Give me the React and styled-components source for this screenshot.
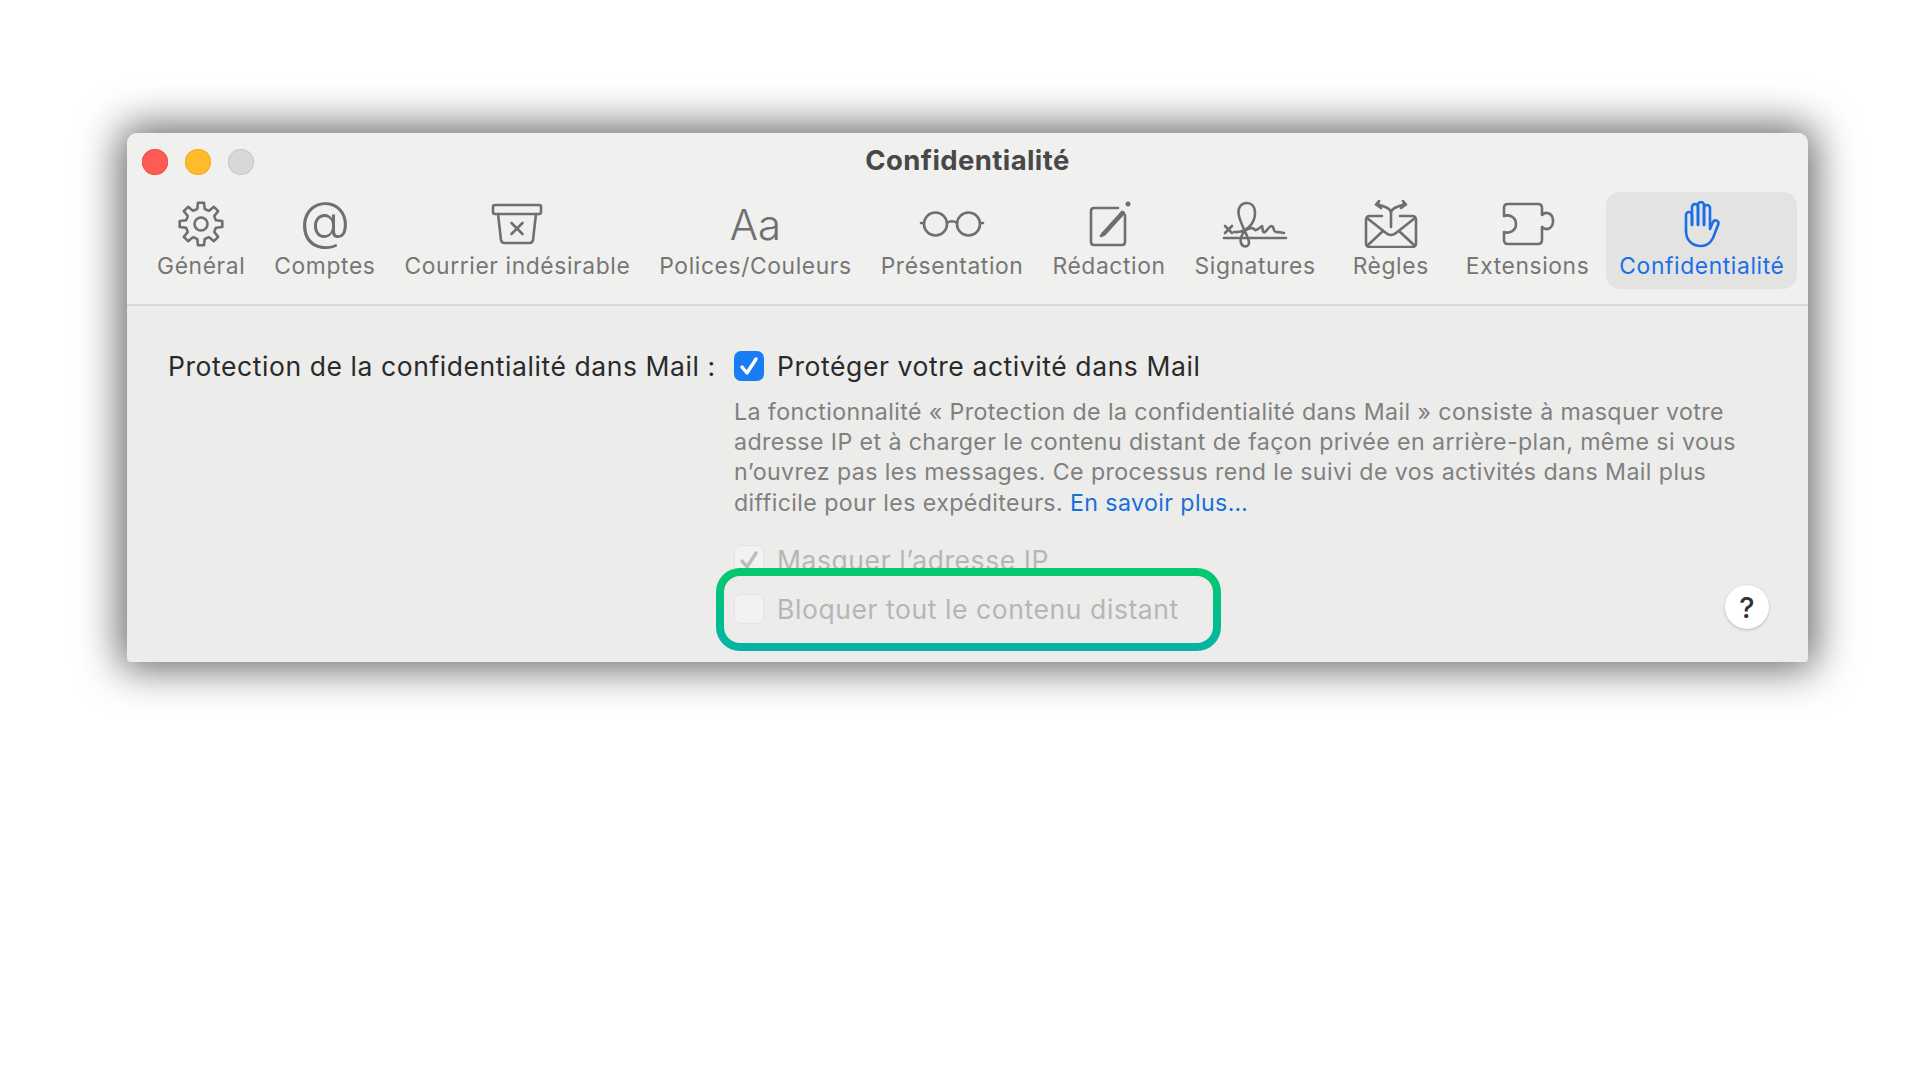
import React from 'react'
import styled, { createGlobalStyle } from 'styled-components'

const GlobalStyle = createGlobalStyle`
  html, body {
    margin: 0;
    background: #fff;
    font-family: Inter, "Liberation Sans", sans-serif;
  }
`

const Page = styled.div`
  width: 1920px;
  height: 1080px;
  padding: 133px 0 0 127px;
  box-sizing: border-box;
  overflow: hidden;
`

const Window = styled.div`
  position: relative;
  width: 1681px;
  height: 529px;
  border-radius: 10px 10px 4px 4px;
  background: #ececeb;
  box-shadow: 0 0 42px 7px rgba(0, 0, 0, 0.6);
  overflow: hidden;
`

const Toolbar = styled.header`
  height: 173px;
  box-sizing: border-box;
  background: #f0f0ef;
  border-bottom: 2px solid #d8d8d7;
`

const TitleBar = styled.div`
  position: relative;
  height: 59px;
  display: flex;
  align-items: center;
  padding-left: 15px;
  gap: 17px;
`

const Light = styled.span`
  width: 26px;
  height: 26px;
  margin-top: -2px;
  border-radius: 50%;
  background: ${(p) => p.$color};
  box-shadow: inset 0 0 0 1px ${(p) => p.$edge};
`

const Title = styled.h1`
  position: absolute;
  left: 0;
  right: 0;
  top: 12px;
  margin: 0;
  text-align: center;
  font-size: 27.5px;
  line-height: 30px;
  letter-spacing: 0.4px;
  font-weight: 700;
  color: #484848;
`

const Tabs = styled.nav`
  display: flex;
  gap: 5px;
  padding-left: 18px;
`

const Tab = styled.div`
  display: flex;
  flex-direction: column;
  align-items: center;
  height: 97px;
  padding: 8px ${(p) => p.$pad || 12}px 0;
  box-sizing: border-box;
  border-radius: 14px;
  background: ${(p) => (p.$active ? '#e3e3e2' : 'transparent')};
  color: ${(p) => (p.$active ? '#1a6fe8' : '#767676')};
`

const IconBox = styled.div`
  height: 48px;
  display: flex;
  align-items: center;
  justify-content: center;
  color: inherit;
`

const GlyphIcon = styled.span`
  margin-top: ${(p) => p.$lift || 0}px;
  font-size: ${(p) => p.$size}px;
  line-height: 48px;
  font-weight: 300;
  color: #6f6f6f;
`

const TabLabel = styled.span`
  margin-top: 5px;
  font-size: 22.8px;
  line-height: 26px;
  letter-spacing: 0.62px;
  white-space: nowrap;
`

const Content = styled.main`
  display: grid;
  grid-template-columns: 547px 1fr;
  column-gap: 19px;
  padding: 45px 0 0 41px;
`

const RowLabel = styled.div`
  font-size: 26.5px;
  line-height: 30px;
  letter-spacing: 0.57px;
  color: #2a2a2a;
  white-space: nowrap;
`

const OptionColumn = styled.div`
  display: flex;
  flex-direction: column;
`

const CheckRow = styled.label`
  display: flex;
  align-items: center;
  gap: 13px;
  margin-top: ${(p) => p.$lift || 0}px;
  font-size: 26.5px;
  line-height: 30px;
  letter-spacing: 0.58px;
  white-space: nowrap;
  color: ${(p) => (p.$disabled ? '#b6b6b6' : '#2a2a2a')};
`

const Box = styled.span`
  flex: none;
  width: 30px;
  height: 30px;
  box-sizing: border-box;
  border-radius: 7px;
  display: flex;
  align-items: center;
  justify-content: center;
  background: ${(p) => (p.$on ? '#1a7cf5' : '#f2f2f1')};
  border: ${(p) => (p.$on ? 'none' : '1.5px solid #e3e3e2')};
`

const Description = styled.p`
  width: 1010px;
  margin: 16px 0 27px;
  font-size: 23.2px;
  line-height: 30.2px;
  letter-spacing: 0.4px;
  color: #808080;
`

const MoreLink = styled.a`
  color: #1a6fdc;
  text-decoration: none;
`

const Highlight = styled.div`
  position: absolute;
  left: 589px;
  top: 435px;
  width: 505px;
  height: 83px;
  box-sizing: border-box;
  display: flex;
  align-items: center;
  padding-left: 10px;
  border: 8px solid transparent;
  border-radius: 24px;
  background: linear-gradient(#ececeb, #ececeb) padding-box,
    linear-gradient(#04c96c, #04b3a6) border-box;
`

const HelpButton = styled.button`
  position: absolute;
  left: 1598px;
  top: 452px;
  width: 44px;
  height: 44px;
  padding: 0;
  border: none;
  border-radius: 50%;
  background: #fff;
  box-shadow: 0 1px 3px rgba(0, 0, 0, 0.22);
  font-family: inherit;
  font-size: 29px;
  font-weight: 500;
  color: #333;
`

const gearPath = (() => {
  const cx = 24
  const cy = 24
  const pts = []
  for (let i = 0; i < 8; i++) {
    const a = (i * Math.PI) / 4 - Math.PI / 2
    const at = (r, d) => `${(cx + r * Math.cos(a + d)).toFixed(2)} ${(cy + r * Math.sin(a + d)).toFixed(2)}`
    pts.push({ a: at(15.5, -0.24), b: at(21.5, -0.14), c: at(21.5, 0.14), d: at(15.5, 0.24), m: at(15, 0.39) })
  }
  let d = `M${pts[0].a}`
  pts.forEach((p, i) => {
    const next = pts[(i + 1) % 8]
    d += ` L${p.b} L${p.c} L${p.d} Q${p.m} ${next.a}`
  })
  return d + 'Z'
})()

const Svg = ({ w = 48, h = 48, vb = '0 0 48 48', sw = 2.6, children }) => (
  <svg width={w} height={h} viewBox={vb} fill="none" stroke="currentColor" strokeWidth={sw} strokeLinecap="round" strokeLinejoin="round">
    {children}
  </svg>
)

const Gray = styled.span`
  display: flex;
  color: #6f6f6f;
`

const GearIcon = () => (
  <Gray>
    <Svg>
      <path d={gearPath} />
      <circle cx="24" cy="24" r="6.5" />
    </Svg>
  </Gray>
)

const JunkIcon = () => (
  <Gray>
    <Svg w={52} vb="0 0 52 48">
      <rect x="2" y="5" width="48" height="9" rx="2" />
      <path d="M7 14 L10 40 Q10.5 43 13.5 43 H38.5 Q41.5 43 42 40 L45 14" />
      <path d="M20.5 23 L31.5 34 M31.5 23 L20.5 34" />
    </Svg>
  </Gray>
)

const GlassesIcon = () => (
  <Gray>
    <Svg w={66} h={46} vb="0 0 66 46">
      <circle cx="16.5" cy="23" r="11.5" />
      <circle cx="49.5" cy="23" r="11.5" />
      <path d="M28 22 Q33 18.5 38 22 M5 22 H2 M61 22 H64" />
    </Svg>
  </Gray>
)

const ComposeIcon = () => (
  <Gray>
    <Svg>
      <path d="M33 8 H9 Q6 8 6 11 V42 Q6 45 9 45 H37 Q40 45 40 42 V15" />
      <path d="M18 33 L37 12" />
      <path d="M18 33 L16 36 L20 34 L39 13 L37 12" fill="currentColor" />
      <circle cx="43" cy="4" r="1.2" />
    </Svg>
  </Gray>
)

const SignatureIcon = () => (
  <Gray>
    <Svg w={66} vb="0 0 66 48">
      <path d="M2 38 H64" />
      <path d="M3 26 L10 33 M10 26 L3 33" />
      <path d="M12 32 C24 33 33 24 33 13 C33 6 29 3 25 3 C19 3 15 8 17 16 C19 25 26 36 27 42 C27.5 46 24 47 21.5 46 C17 44 18 35 24 30 C28 27 32 28 33 30 C35 31 37 28 40 26 C41 29 40 33 43 32 C46 29 49 24 51 27 C52 30 52 33 56 32 L62 33" />
    </Svg>
  </Gray>
)

const RulesIcon = () => (
  <Gray>
    <Svg w={54} vb="0 0 54 48">
      <path d="M18 16 H6 Q2 16 2 20 V43 Q2 47 6 47 H48 Q52 47 52 43 V20 Q52 16 48 16 H36" />
      <path d="M4 45 L19 31 M50 45 L35 31" />
      <path d="M3 18 L22 33 Q27 37 32 33 L51 18" />
      <path d="M27 27 V13 C27 9 23 7 15 5 M27 13 C27 9 31 7 39 5" />
      <path d="M15 1 L12 4.5 L17 8 M39 1 L42 4.5 L37 8" fill="currentColor" />
    </Svg>
  </Gray>
)

const PuzzleIcon = () => (
  <Gray>
    <Svg w={54} vb="0 0 54 48">
      <path d="M7 4 H37 Q41 4 41 8 V15 C45 11 52 13 52 21 C52 29 45 31 41 27 V40 Q41 44 37 44 H7 Q3 44 3 40 V32 C8 34 15 31 15 24 C15 17 8 14 3 16 V8 Q3 4 7 4 Z" />
    </Svg>
  </Gray>
)

const HandIcon = () => (
  <Svg w={38} h={47} vb="0 0 38 47">
    <path d="M3 30 V14 a3 3 0 0 1 6 0 V24" />
    <path d="M9 24 V6 a3 3 0 0 1 6 0 V24" />
    <path d="M15 24 V4 a3 3 0 0 1 6 0 V24" />
    <path d="M21 24 V7 a3 3 0 0 1 6 0 V28 L30 21 a2.9 2.9 0 0 1 5.4 2 L30 37 C27 43 23 45 18 45 C9 45 3 39 3 30" />
  </Svg>
)

const tabs = [
  { label: 'Général', icon: <GearIcon /> },
  { label: 'Comptes', icon: <GlyphIcon $size={52} $lift={-6}>@</GlyphIcon> },
  { label: 'Courrier indésirable', icon: <JunkIcon /> },
  { label: 'Polices/Couleurs', icon: <GlyphIcon $size={42} $lift={2}>Aa</GlyphIcon> },
  { label: 'Présentation', icon: <GlassesIcon /> },
  { label: 'Rédaction', icon: <ComposeIcon /> },
  { label: 'Signatures', icon: <SignatureIcon /> },
  { label: 'Règles', icon: <RulesIcon />, pad: 20 },
  { label: 'Extensions', icon: <PuzzleIcon /> },
  { label: 'Confidentialité', icon: <HandIcon />, active: true, pad: 13 },
]

const Check = ({ color, sw = 3.4 }) => (
  <svg width="22" height="22" viewBox="0 0 22 22" fill="none" stroke={color} strokeWidth={sw} strokeLinecap="round" strokeLinejoin="round">
    <path d="M4 12 L9 18 L18 4" />
  </svg>
)

export default function App() {
  return (
    <Page>
      <GlobalStyle />
      <Window>
        <Toolbar>
          <TitleBar>
            <Light $color="#ff5b55" $edge="#f25048" />
            <Light $color="#ffbb2c" $edge="#f0ae22" />
            <Light $color="#d8d8d7" $edge="#c8c8c7" />
            <Title>Confidentialité</Title>
          </TitleBar>
          <Tabs>
            {tabs.map((t) => (
              <Tab key={t.label} $active={t.active} $pad={t.pad}>
                <IconBox>{t.icon}</IconBox>
                <TabLabel>{t.label}</TabLabel>
              </Tab>
            ))}
          </Tabs>
        </Toolbar>
        <Content>
          <RowLabel>Protection de la confidentialité dans Mail :</RowLabel>
          <OptionColumn>
            <CheckRow>
              <Box $on><Check color="#fff" /></Box>
              Protéger votre activité dans Mail
            </CheckRow>
            <Description>
              La fonctionnalité « Protection de la confidentialité dans Mail » consiste à masquer votre
              adresse IP et à charger le contenu distant de façon privée en arrière-plan, même si vous
              n’ouvrez pas les messages. Ce processus rend le suivi de vos activités dans Mail plus
              difficile pour les expéditeurs. <MoreLink href="#">En savoir plus…</MoreLink>
            </Description>
            <CheckRow $disabled>
              <Box><Check color="#bdbdbd" /></Box>
              Masquer l’adresse IP
            </CheckRow>
          </OptionColumn>
        </Content>
        <Highlight>
          <CheckRow $disabled $lift={-2}>
            <Box />
            Bloquer tout le contenu distant
          </CheckRow>
        </Highlight>
        <HelpButton>?</HelpButton>
      </Window>
    </Page>
  )
}
